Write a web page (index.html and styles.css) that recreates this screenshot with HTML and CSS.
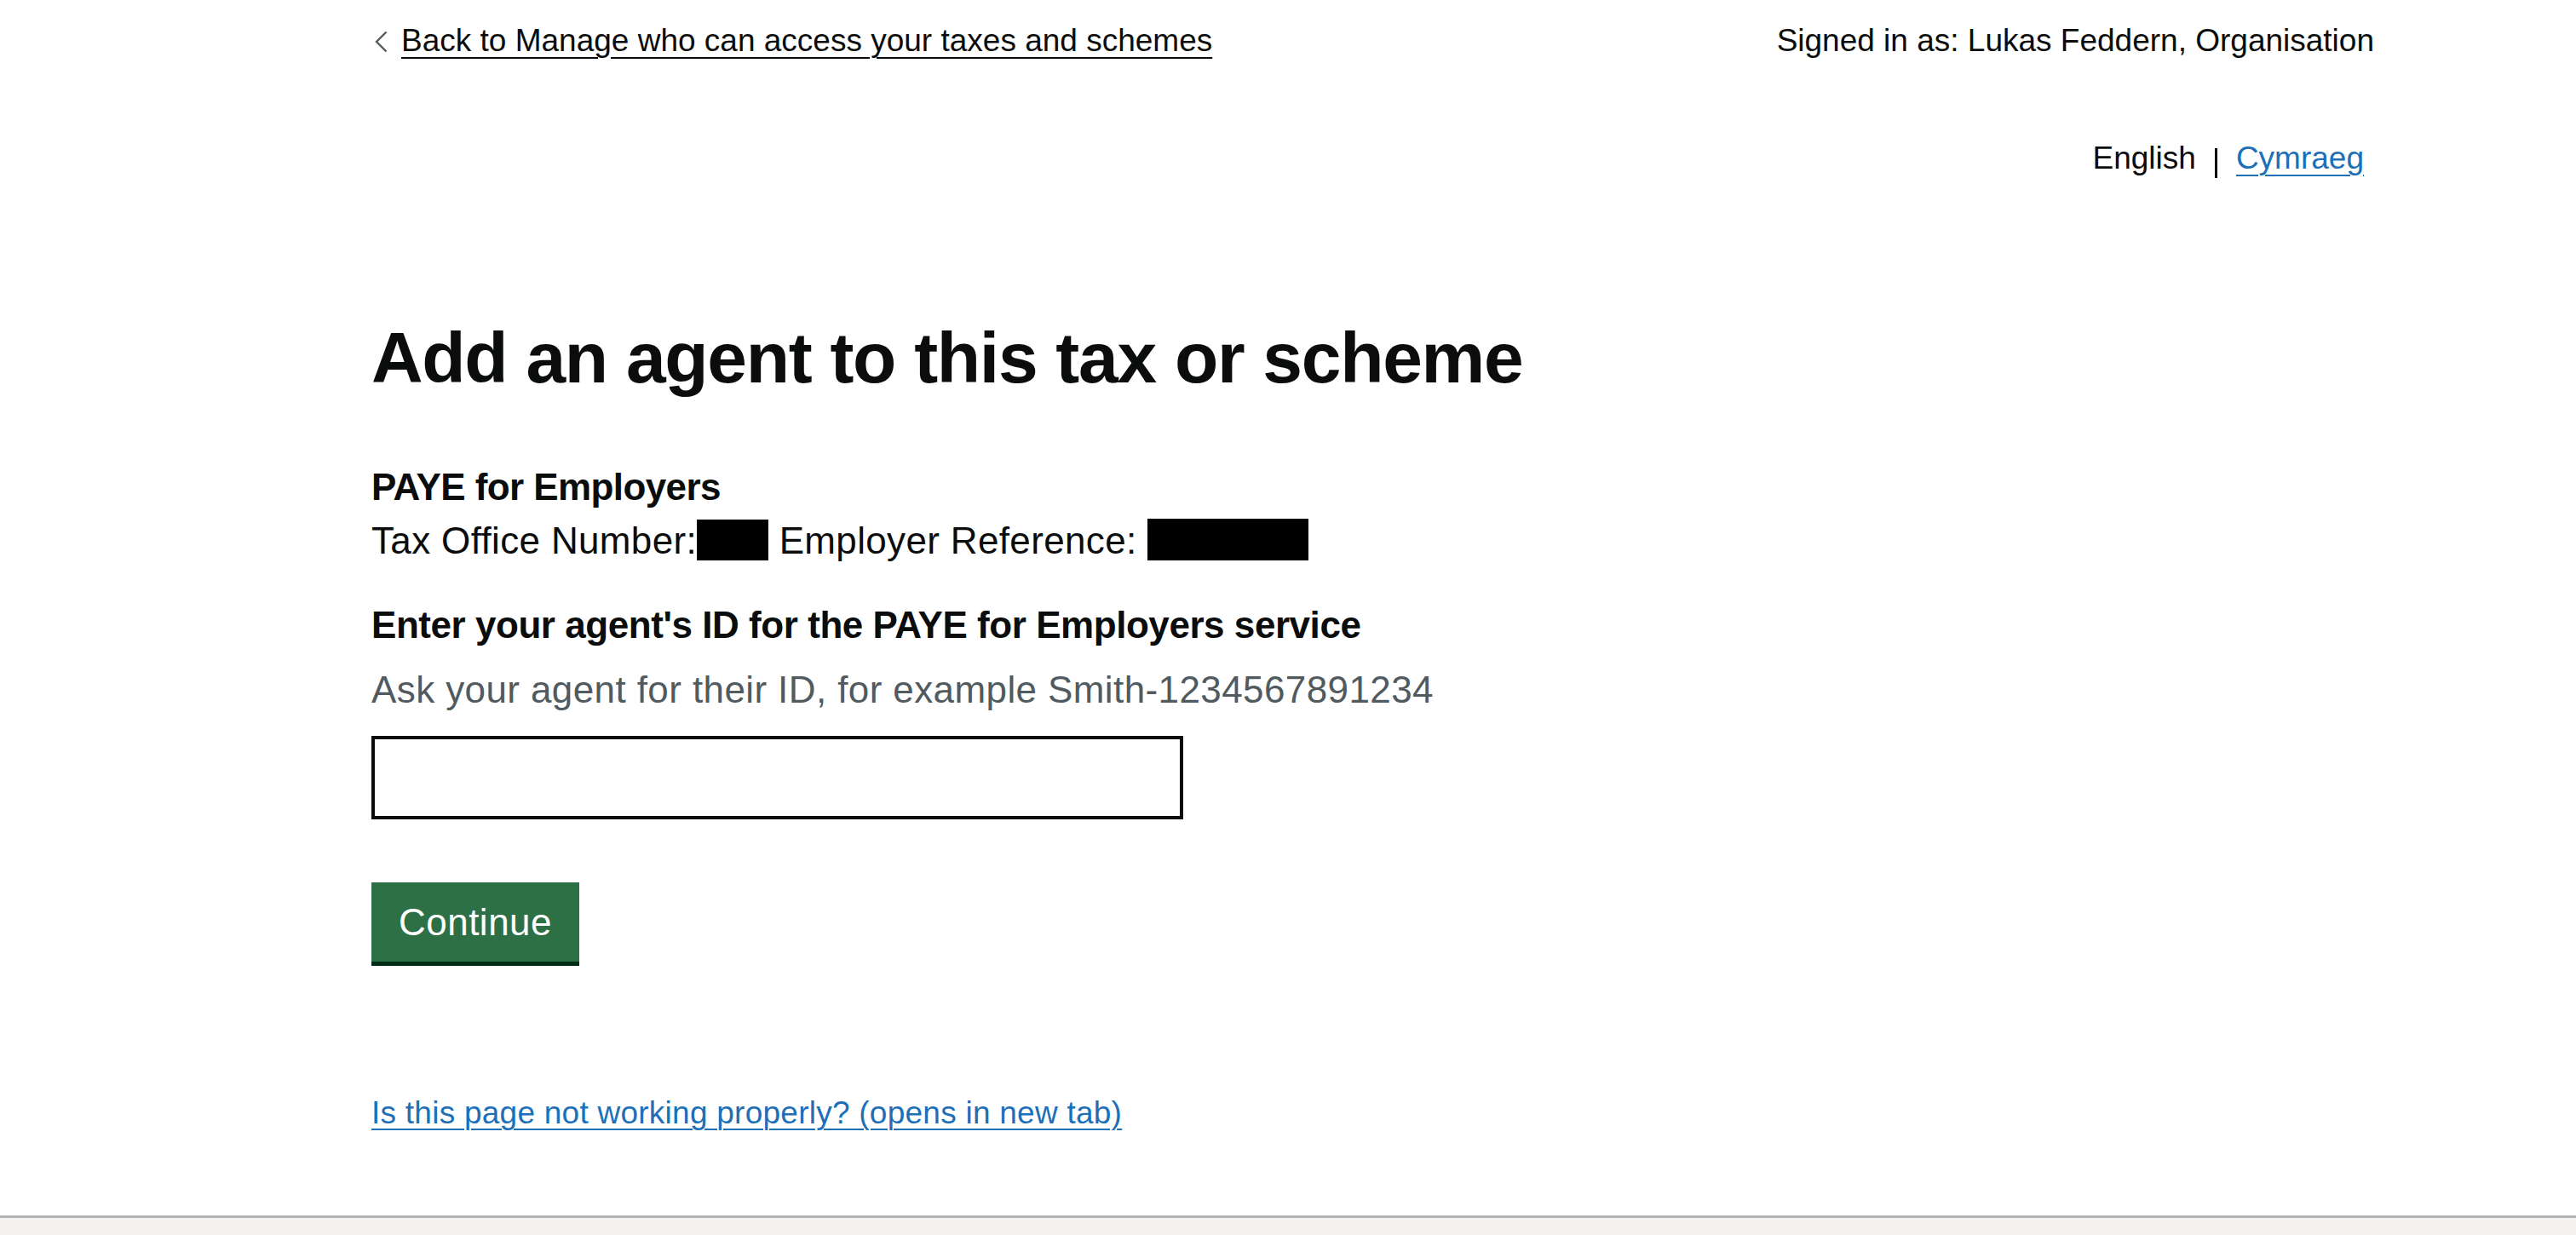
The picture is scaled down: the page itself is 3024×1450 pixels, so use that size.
FILE: index.html
```html
<!DOCTYPE html>
<html lang="en">
<head>
<meta charset="utf-8">
<title>Add an agent to this tax or scheme</title>
<link rel="stylesheet" href="styles.css">
</head>
<body>
<div class="page">
  <div class="top-bar">
    <a class="back-link" href="#">
      <svg class="chevron" width="16" height="26" viewBox="0 0 16 26" aria-hidden="true"><polyline points="13.5,1.5 2,13 13.5,24.5" fill="none" stroke="#505a5f" stroke-width="2.4"/></svg>
      <span class="back-text">Back to Manage who can access your taxes and schemes</span>
    </a>
    <span class="signed-in">Signed in as: Lukas Feddern, Organisation</span>
  </div>

  <nav class="lang">
    <span class="lang-current">English</span>
    <span class="lang-sep"></span>
    <a class="lang-link" href="#">Cymraeg</a>
  </nav>

  <main class="main">
    <h1 class="title">Add an agent to this tax or scheme</h1>
    <p class="service-name">PAYE for Employers</p>
    <p class="service-refs">Tax Office Number:<span class="redact redact-sm"></span> Employer Reference: <span class="redact redact-lg"></span></p>

    <label class="label" for="agent-id">Enter your agent's ID for the PAYE for Employers service</label>
    <div class="hint">Ask your agent for their ID, for example Smith-1234567891234</div>
    <input class="input" id="agent-id" type="text">

    <button class="button" type="button">Continue</button>

    <a class="problem-link" href="#">Is this page not working properly? (opens in new tab)</a>
  </main>
</div>
<footer class="footer"></footer>
</body>
</html>
```

FILE: styles.css
```css
html, body {
  margin: 0;
  padding: 0;
  background: #ffffff;
}

body {
  font-family: "Liberation Sans", Arial, sans-serif;
  color: #0b0c0c;
}

.page {
  padding: 0 237px 0 436px;
}

.top-bar {
  display: flex;
  justify-content: space-between;
  align-items: flex-start;
  padding-top: 26px;
  font-size: 37px;
  line-height: 44px;
}

.back-link {
  display: flex;
  align-items: center;
  color: #0b0c0c;
  text-decoration: none;
  margin-left: 4px;
}

.chevron {
  display: block;
  margin-right: 15px;
  margin-top: 1px;
}

.back-text {
  text-decoration: underline;
  text-decoration-thickness: 2px;
  text-underline-offset: 7px;
}

.signed-in {
  color: #0b0c0c;
}

.lang {
  display: flex;
  justify-content: flex-end;
  align-items: flex-start;
  margin-top: 94px;
  margin-right: 12px;
  font-size: 37px;
  line-height: 44px;
}

.lang-current {
  color: #0b0c0c;
}

.lang-sep {
  display: block;
  width: 3px;
  height: 35px;
  margin: 10px 22px 0 22px;
  background: #0b0c0c;
}

.lang-link {
  color: #1d70b8;
  text-decoration: underline;
  text-decoration-thickness: 2px;
  text-underline-offset: 7px;
}

.main {
  display: flex;
  flex-direction: column;
  align-items: flex-start;
}

.title {
  margin: 161px 0 0;
  font-size: 84px;
  line-height: 100px;
  font-weight: 700;
  letter-spacing: -1.3px;
}

.service-name {
  margin: 76px 0 0;
  font-size: 44px;
  line-height: 52px;
  font-weight: 700;
  letter-spacing: -0.6px;
}

.service-refs {
  margin: 11px 0 0;
  font-size: 44px;
  line-height: 52px;
  letter-spacing: 0.35px;
}

.redact {
  display: inline-block;
  background: #000000;
  height: 48px;
  vertical-align: -8px;
}

.redact-sm {
  width: 84px;
}

.redact-lg {
  width: 189px;
  height: 49px;
}

.label {
  display: block;
  margin-top: 47px;
  font-size: 44px;
  line-height: 52px;
  font-weight: 700;
  letter-spacing: -0.45px;
}

.hint {
  margin-top: 24px;
  font-size: 44px;
  line-height: 52px;
  color: #505a5f;
  letter-spacing: 0.4px;
}

.input {
  display: block;
  box-sizing: border-box;
  margin: 28px 0 0;
  width: 953px;
  height: 98px;
  border: 4px solid #0b0c0c;
  border-radius: 0;
  padding: 0 12px;
  font-family: inherit;
  font-size: 44px;
  background: #ffffff;
  outline: none;
}

.button {
  margin-top: 74px;
  width: 244px;
  height: 93px;
  padding: 0;
  border: none;
  border-radius: 0;
  background: #2e7045;
  box-shadow: 0 5px 0 #002d18;
  color: #ffffff;
  font-family: inherit;
  font-size: 44px;
  line-height: 93px;
  letter-spacing: 0.5px;
  cursor: pointer;
}

.problem-link {
  margin-top: 156px;
  font-size: 37px;
  line-height: 44px;
  color: #1d70b8;
  text-decoration: underline;
  text-decoration-thickness: 2px;
  text-underline-offset: 6px;
  letter-spacing: 0.25px;
}

.footer {
  margin-top: 98px;
  height: 21px;
  border-top: 3px solid #b1b4b6;
  background: #f3f2f1;
}
```
